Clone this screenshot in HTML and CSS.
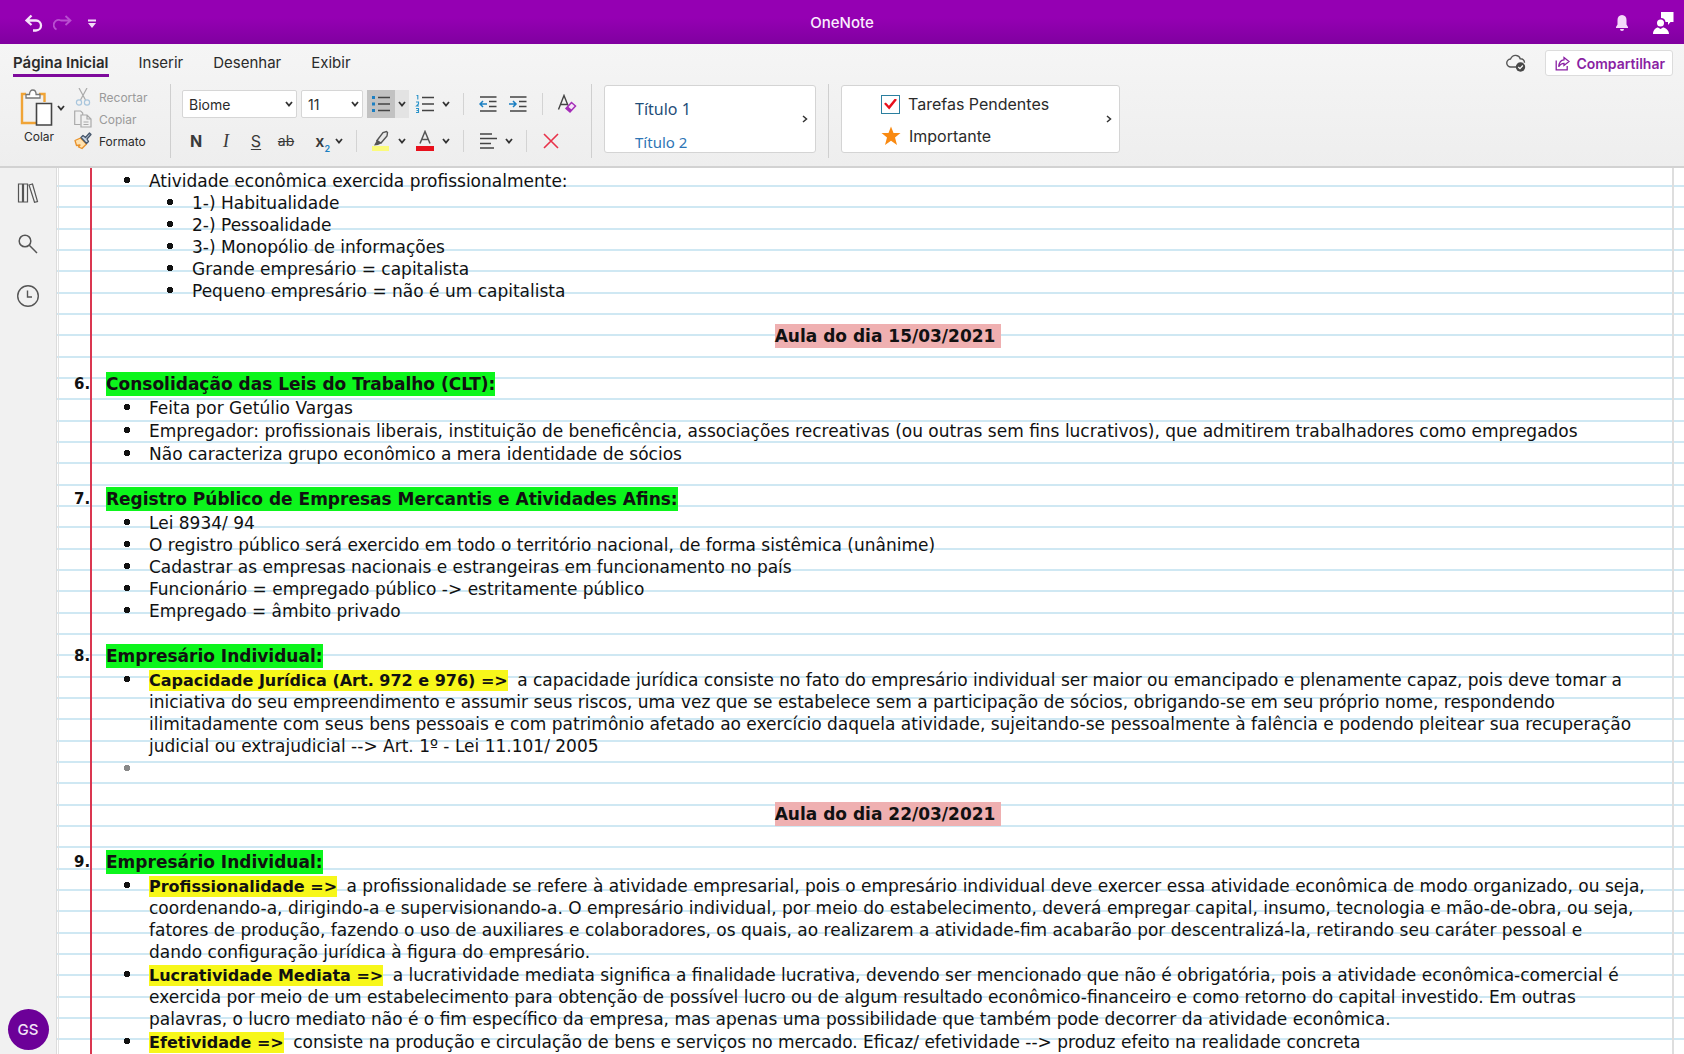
FILE: index.html
```html
<!DOCTYPE html>
<html lang="pt-BR">
<head>
<meta charset="utf-8">
<title>OneNote</title>
<link rel="stylesheet" href="styles.css">
</head>
<body>
<svg class="defs" aria-hidden="true">
  <symbol id="chev" viewBox="0 0 8 6"><path d="M1 1l3 3.500 3-3.500" fill="none" stroke="#333" stroke-width="1.800"/></symbol>
  <symbol id="chev-right" viewBox="0 0 6 8"><path d="M1 1l3.500 3-3.500 3" fill="none" stroke="#333" stroke-width="1.500"/></symbol>
</svg>
<div class="app">
  <header class="titlebar">
    <div class="quick">
      <button class="plain" aria-label="Desfazer"><svg width="20" height="20" viewBox="0 0 20 20" fill="none" stroke="#f6e4fa" stroke-width="2.300"><path d="M7.500 2.500L2.500 7.500l5 4.500M2.500 7.500h9.500a5 5 0 0 1 0 10H9"/></svg></button>
      <button class="plain" aria-label="Refazer"><svg width="20" height="20" viewBox="0 0 20 20" fill="none" stroke="#b94fd0" stroke-width="1.800"><path d="M12.500 3l5 4.500-5 4.500M17.500 7.500H8a5 5 0 0 0 -4.500 9"/></svg></button>
      <button class="plain" aria-label="Personalizar"><svg width="20" height="20" viewBox="0 0 20 20" fill="#f0dcf6"><path d="M6 6.500h8v2H6zM6 10h8l-4 5z"/></svg></button>
    </div>
    <h1 class="app-name">OneNote</h1>
    <div class="account">
      <button class="plain" aria-label="Notificações"><svg width="16" height="18" viewBox="0 0 16 18" fill="#f4d9fa"><path d="M8 1c3 0 4.500 2.200 4.500 5v4.500l1.500 2.500v1H2v-1l1.500-2.500V6C3.500 3.200 5 1 8 1zM6 15h4a2 2 0 0 1-4 0z"/></svg></button>
      <button class="plain" aria-label="Conta"><svg width="22" height="24" viewBox="0 0 22 24" fill="#fff"><path d="M9 1h12.500v10h-3L16 14v-3h-2.500A4.500 4.500 0 0 0 9 7z"/><circle cx="8.500" cy="12" r="3.500"/><path d="M1 23c0-4 3-6.500 5-6.500l2.500 1.500 2.500-1.500c2 0 6 2.500 6 6.500z"/></svg></button>
    </div>
  </header>

  <div class="ribbon">
    <div class="tabs">
      <nav class="tab-list">
        <a class="tab active" href="#">Página Inicial</a>
        <a class="tab" href="#">Inserir</a>
        <a class="tab" href="#">Desenhar</a>
        <a class="tab" href="#">Exibir</a>
      </nav>
      <div class="share-area">
        <svg width="20" height="20" viewBox="0 0 20 20"><path d="M10 14H5a4 4 0 0 1-.500-8C6 3 8 2 10.500 2.500c2 .300 3.200 1.500 3.700 3.200 2.500-.200 4.300 1.500 4.300 4" fill="none" stroke="#555" stroke-width="1.400"/><circle cx="14.500" cy="14" r="4.700" fill="#484848"/><path d="M12.300 14l1.700 1.700 2.800-3.200" fill="none" stroke="#fff" stroke-width="1.200"/></svg>
        <button class="share"><svg width="15" height="15" viewBox="0 0 15 15" fill="none" stroke="#8a1fa3" stroke-width="1.300"><path d="M1.200 4.500v9.300h11V10M9 1.500l5 4-5 4V7.300C6.500 7.300 5 8.500 3.700 10.800 4 7 6 4 9 3.800z"/></svg>Compartilhar</button>
      </div>
    </div>

    <div class="groups">
      <div class="group clipboard">
        <button class="plain paste">
          <span class="paste-icon">
            <svg width="34" height="38" viewBox="0 0 34 38"><path d="M6 5H2v29h16M19 5h5.500v8" fill="none" stroke="#f0a437" stroke-width="2.400"/><path d="M6 9V5.500h3.500C9.500 2.500 11 1 12.800 1s3.300 1.500 3.300 4.500H20V9z" fill="#fff" stroke="#777" stroke-width="1.300"/><path d="M16.500 14.500h15V36h-15z" fill="#fff" stroke="#444" stroke-width="1.600"/></svg>
            <svg width="8" height="6"><use href="#chev"/></svg>
          </span>
          Colar
        </button>
        <div class="clip-list">
          <button class="clip off"><svg width="18" height="18" viewBox="0 0 18 18" fill="none" stroke-width="1.200"><path d="M5 0l6.500 12M13 0L6.500 12" stroke="#aaa"/><circle cx="5" cy="14.500" r="2.600" stroke="#a9c6dd"/><circle cx="13" cy="14.500" r="2.600" stroke="#a9c6dd"/></svg>Recortar</button>
          <button class="clip off"><svg width="18" height="18" viewBox="0 0 18 18" fill="#f1f1f1" stroke="#aaa" stroke-width="1.200"><path d="M6.500 14.500H.700V1h6l2 2v2"/><path d="M7 5h6l4 4v8H7zM13 5v4h4M9.500 12h5M9.500 14.500h5"/></svg>Copiar</button>
          <button class="clip"><svg width="18" height="18" viewBox="0 0 18 18" stroke-linejoin="round" stroke-width="1.300"><path d="M1 8.500L6.500 6l6 6L8 16.500 4.500 15 6 13l-3.500.500z" fill="#ffe2b0" stroke="#e8912a"/><path d="M7 5.500l2-2 2.500 2 4-4.500 1.500 1.500-4 4.500 1.500 2.500-2 2z" fill="#c6d3e2" stroke="#46566b"/></svg>Formato</button>
        </div>
      </div>

      <div class="group tools">
        <div class="tool-row">
          <label class="picker font"><select aria-label="Fonte"><option>Biome</option></select><svg width="8" height="6"><use href="#chev"/></svg></label>
          <label class="picker size"><select aria-label="Tamanho"><option>11</option></select><svg width="8" height="6"><use href="#chev"/></svg></label>
          <span class="split pressed">
            <button class="tool" aria-label="Marcadores"><svg width="20" height="20" viewBox="0 0 20 20"><path d="M7 3.500h12M7 10h12M7 16.500h12" stroke="#444" stroke-width="1.500"/><path d="M1 2h3v3H1zM1 8.500h3v3H1zM1 15h3v3H1z" fill="#1b7fc2"/></svg></button>
            <button class="drop" aria-label="Opções de marcadores"><svg width="8" height="6"><use href="#chev"/></svg></button>
          </span>
          <span class="split">
            <button class="tool" aria-label="Numeração"><svg width="20" height="20" viewBox="0 0 20 20"><path d="M7 3.500h12M7 10h12M7 16.500h12" stroke="#444" stroke-width="1.500"/><path d="M1.500 1.500h1.300v4M1 8h2.500v2L1.500 12h2.500M1 14.500h2.500v4H1M1.500 16.500h2" fill="none" stroke="#2b93c9" stroke-width="1.100"/></svg></button>
            <button class="drop" aria-label="Opções de numeração"><svg width="8" height="6"><use href="#chev"/></svg></button>
          </span>
          <span class="rule"></span>
          <button class="tool" aria-label="Diminuir recuo"><svg width="18" height="18" viewBox="0 0 18 18" fill="none"><path d="M1 2h16.500M10 6.500h7.500M10 11.500h7.500M1 16h16.500" stroke="#444" stroke-width="1.400"/><path d="M8 9H1M4 6L1 9l3 3" stroke="#1b7fc2" stroke-width="1.500"/></svg></button>
          <button class="tool" aria-label="Aumentar recuo"><svg width="18" height="18" viewBox="0 0 18 18" fill="none"><path d="M1 2h16.500M10 6.500h7.500M10 11.500h7.500M1 16h16.500" stroke="#444" stroke-width="1.400"/><path d="M0 9h7M4 6l3 3-3 3" stroke="#1b7fc2" stroke-width="1.500"/></svg></button>
          <span class="rule"></span>
          <button class="tool" aria-label="Limpar formatação"><svg width="20" height="20" viewBox="0 0 20 20" fill="none"><path d="M1.500 15.500L7 1.500l4 10M3.500 10.500h6.500" stroke="#444" stroke-width="1.400"/><path d="M14.500 8.500l4 3.500-5.500 6-4-3.500z" fill="#f5e3f8" stroke="#a52db8" stroke-width="1.500"/><path d="M11 12.500l4 3.500-2 2-4-3.500z" fill="#a52db8"/></svg></button>
        </div>
        <div class="tool-row">
          <button class="tool letter bold">N</button>
          <button class="tool letter italic">I</button>
          <button class="tool letter under">S</button>
          <button class="tool letter strike">ab</button>
          <span class="split">
            <button class="tool letter script">x<sub>2</sub></button>
          </span>
          <button class="drop" aria-label="Opções de subscrito"><svg width="8" height="6"><use href="#chev"/></svg></button>
          <span class="rule"></span>
          <span class="split">
            <button class="tool" aria-label="Realce"><svg width="20" height="22" viewBox="0 0 20 22"><path d="M1 16h17v5H1z" fill="#fbfb7c"/><path d="M6 10.500L12 2.500l3.500-1 1 1-.500 3.500-6 7z" fill="#e8e8e8" stroke="#555" stroke-width="1.400"/><path d="M6 10l4 3.500-3 1.500-4 .500z" fill="#555"/></svg></button>
            <button class="drop" aria-label="Cores de realce"><svg width="8" height="6"><use href="#chev"/></svg></button>
          </span>
          <span class="split">
            <button class="tool" aria-label="Cor da fonte"><svg width="20" height="22" viewBox="0 0 20 22"><path d="M5 13.500L10 1.500l5 12M7 9.500h6" fill="none" stroke="#555" stroke-width="1.500"/><path d="M1 16h18v5H1z" fill="#e8101c"/></svg></button>
            <button class="drop" aria-label="Cores da fonte"><svg width="8" height="6"><use href="#chev"/></svg></button>
          </span>
          <span class="rule"></span>
          <span class="split">
            <button class="tool" aria-label="Alinhamento"><svg width="18" height="18" viewBox="0 0 18 18"><path d="M1 2h12M1 6.500h17M1 11.500h11M1 16h14" stroke="#444" stroke-width="1.400"/></svg></button>
            <button class="drop" aria-label="Opções de alinhamento"><svg width="8" height="6"><use href="#chev"/></svg></button>
          </span>
          <span class="rule"></span>
          <button class="tool" aria-label="Excluir"><svg width="16" height="16" viewBox="0 0 16 16"><path d="M1 1l14 14M15 1L1 15" stroke="#e8324a" stroke-width="1.600"/></svg></button>
        </div>
      </div>

      <div class="group">
        <div class="gallery styles">
          <div class="gallery-list">
            <button class="plain title-one">Título 1</button>
            <button class="plain title-two">Título 2</button>
          </div>
          <button class="plain" aria-label="Mais estilos"><svg width="6" height="8"><use href="#chev-right"/></svg></button>
        </div>
      </div>

      <div class="group">
        <div class="gallery tags">
          <div class="gallery-list">
            <label class="tag"><input type="checkbox" checked>Tarefas Pendentes</label>
            <button class="plain tag"><svg width="20" height="20" viewBox="0 0 20 20"><path d="M10 .500l2.500 6.500h7L14 11.500l2 7.500-6-4.300L4 19l2-7.500L.500 7h7z" fill="#f98a12"/></svg>Importante</button>
          </div>
          <button class="plain" aria-label="Mais marcas"><svg width="6" height="8"><use href="#chev-right"/></svg></button>
        </div>
      </div>
    </div>
  </div>

  <div class="workspace">
    <aside class="sidebar">
      <button class="plain" aria-label="Blocos de anotações"><svg width="22" height="22" viewBox="0 0 22 22" fill="none" stroke="#555" stroke-width="1.200"><path d="M1.500 2h4v18h-4zM6.500 2h4v18h-4zM12 3l3.500-1 5 17.500-3 .800z"/></svg></button>
      <button class="plain" aria-label="Pesquisar"><svg width="22" height="22" viewBox="0 0 22 22" fill="none" stroke="#555" stroke-width="1.500"><circle cx="8" cy="8" r="5.800"/><path d="M12.300 12.300L20 20"/></svg></button>
      <button class="plain" aria-label="Recentes"><svg width="24" height="24" viewBox="0 0 24 24" fill="none" stroke="#555" stroke-width="1.400"><circle cx="12" cy="12" r="10.300"/><path d="M11.500 6.500V13H16"/></svg></button>
      <button class="avatar">GS</button>
    </aside>

    <main class="notes">
      <ul class="points">
        <li>Atividade econômica exercida profissionalmente:
          <ul>
            <li>1-) Habitualidade</li>
            <li>2-) Pessoalidade</li>
            <li>3-) Monopólio de informações</li>
            <li>Grande empresário = capitalista</li>
            <li>Pequeno empresário = não é um capitalista</li>
          </ul>
        </li>
      </ul>

      <p class="date"><mark>Aula do dia 15/03/2021&nbsp;</mark></p>

      <section>
        <h2><span class="num">6.</span><mark>Consolidação das Leis do Trabalho (CLT):</mark></h2>
        <ul class="points">
          <li>Feita por Getúlio Vargas</li>
          <li>Empregador: profissionais liberais, instituição de beneficência, associações recreativas (ou outras sem fins lucrativos), que admitirem trabalhadores como empregados</li>
          <li>Não caracteriza grupo econômico a mera identidade de sócios</li>
        </ul>
      </section>

      <section>
        <h2><span class="num">7.</span><mark>Registro Público de Empresas Mercantis e Atividades Afins:</mark></h2>
        <ul class="points tight">
          <li>Lei 8934/ 94</li>
          <li>O registro público será exercido em todo o território nacional, de forma sistêmica (unânime)</li>
          <li>Cadastrar as empresas nacionais e estrangeiras em funcionamento no país</li>
          <li>Funcionário = empregado público -&gt; estritamente público</li>
          <li>Empregado = âmbito privado</li>
        </ul>
      </section>

      <section>
        <h2><span class="num">8.</span><mark>Empresário Individual:</mark></h2>
        <ul class="points">
          <li><mark>Capacidade Jurídica (Art. 972 e 976) =&gt;</mark> a capacidade jurídica consiste no fato do empresário individual ser maior ou emancipado e plenamente capaz, pois deve tomar a<br>iniciativa do seu empreendimento e assumir seus riscos, uma vez que se estabelece sem a participação de sócios, obrigando-se em seu próprio nome, respondendo<br>ilimitadamente com seus bens pessoais e com patrimônio afetado ao exercício daquela atividade, sujeitando-se pessoalmente à falência e podendo pleitear sua recuperação<br>judicial ou extrajudicial --&gt; Art. 1º - Lei 11.101/ 2005</li>
          <li class="blank"></li>
        </ul>
      </section>

      <p class="date"><mark>Aula do dia 22/03/2021&nbsp;</mark></p>

      <section>
        <h2><span class="num">9.</span><mark>Empresário Individual:</mark></h2>
        <ul class="points">
          <li><mark>Profissionalidade =&gt;</mark> a profissionalidade se refere à atividade empresarial, pois o empresário individual deve exercer essa atividade econômica de modo organizado, ou seja,<br>coordenando-a, dirigindo-a e supervisionando-a. O empresário individual, por meio do estabelecimento, deverá empregar capital, insumo, tecnologia e mão-de-obra, ou seja,<br>fatores de produção, fazendo o uso de auxiliares e colaboradores, os quais, ao realizarem a atividade-fim acabarão por descentralizá-la, retirando seu caráter pessoal e<br>dando configuração jurídica à figura do empresário.</li>
          <li><mark>Lucratividade Mediata =&gt;</mark> a lucratividade mediata significa a finalidade lucrativa, devendo ser mencionado que não é obrigatória, pois a atividade econômica-comercial é<br>exercida por meio de um estabelecimento para obtenção de possível lucro ou de algum resultado econômico-financeiro e como retorno do capital investido. Em outras<br>palavras, o lucro mediato não é o fim específico da empresa, mas apenas uma possibilidade que também pode decorrer da atividade econômica.</li>
          <li><mark>Efetividade =&gt;</mark> consiste na produção e circulação de bens e serviços no mercado. Eficaz/ efetividade --&gt; produz efeito na realidade concreta</li>
        </ul>
      </section>
    </main>
  </div>
</div>
</body>
</html>
```
FILE: styles.css
```css
* { box-sizing: border-box; }

body {
  margin: 0;
  font-family: Inter, "Liberation Sans", sans-serif;
  font-size: 14px;
  color: #2b2b2b;
}

button, select, input { font: inherit; color: inherit; margin: 0; }
button { padding: 0; border: 0; background: none; }
svg { display: block; flex: none; }
.defs { position: absolute; width: 0; height: 0; }

.app {
  display: flex;
  flex-direction: column;
  height: 100vh;
  overflow: hidden;
}

/* Title bar */
.titlebar {
  display: grid;
  grid-template-columns: 1fr auto 1fr;
  align-items: center;
  height: 44px;
  padding: 1px 10px 0;
  background: linear-gradient(#9500b3 40%, #8000a0);
  color: #fbeefe;
}
.quick { display: flex; gap: 9px; padding-left: 14px; }
.app-name { margin: 0; font-size: 15px; font-weight: 500; line-height: 20px; }
.account { display: flex; justify-content: flex-end; align-items: center; gap: 22px; }

/* Ribbon */
.ribbon {
  background: linear-gradient(#f5f5f5, #eeeeee);
  border-bottom: 2px solid #d2d2d2;
}
.tabs {
  display: flex;
  justify-content: space-between;
  height: 36px;
  padding: 6px 11px 0 13px;
}
.tab-list { display: flex; gap: 30px; }
.tab {
  height: 27px;
  font-size: 15px;
  line-height: 25px;
  color: #2b2b2b;
  text-decoration: none;
  white-space: nowrap;
}
.tab.active { font-weight: 600; border-bottom: 3px solid #7e0a9c; }
.share-area { display: flex; align-items: center; gap: 19px; height: 26px; }
.share {
  display: flex;
  align-items: center;
  gap: 6px;
  height: 26px;
  padding: 0 7px 0 9px;
  background: #fff;
  border: 1px solid #dcdcdc;
  border-radius: 3px;
  color: #8a1fa3;
  font-weight: 600;
}

.groups { display: flex; height: 86px; padding: 4px 0 8px; }
.group { display: flex; border-right: 1px solid #cfcfcf; padding: 1px 12px 4px; }
.group:last-child { border-right: 0; }

.clipboard { width: 171px; padding: 2px 0 0 20px; gap: 8px; }
.paste {
  display: flex;
  flex-direction: column;
  align-items: flex-start;
  gap: 2px;
  width: 46px;
  padding-top: 3px;
  font-size: 12px;
  line-height: 16px;
  text-indent: 4px;
}
.paste-icon { display: flex; align-items: center; gap: 3px; }
.clip-list { display: flex; flex-direction: column; }
.clip {
  display: flex;
  align-items: center;
  gap: 7px;
  height: 22px;
  font-size: 12px;
}
.clip.off { color: #9a9a9a; }

.tools { flex-direction: column; gap: 9px; width: 421px; padding: 6px 0 0 11px; }
.tool-row { display: flex; align-items: center; gap: 2px; height: 28px; }
.tool { display: grid; place-items: center; width: 28px; height: 28px; }
.drop { display: grid; place-items: center; width: 14px; height: 28px; }
.split { display: flex; }
.pressed .tool { background: #c2c2c2; }
.pressed .drop { background: #e3e3e3; }
.rule { width: 1px; height: 22px; margin: 0 8px; background: #d3d3d3; }
.letter { font-size: 16px; color: #3a3a3a; line-height: 20px; }
.bold { font-weight: 700; }
.italic { font-family: "Liberation Serif", serif; font-style: italic; font-size: 18px; }
.under { text-decoration: underline; text-underline-offset: 2px; }
.strike { font-size: 14px; text-decoration: line-through; }
.script { display: flex; align-items: center; justify-content: flex-end; font-size: 16px; font-weight: 600; }
.script sub { align-self: flex-end; font-size: 9px; line-height: 12px; color: #1b7fc2; }

.picker { display: grid; align-items: center; margin-right: 2px; }
.picker > * { grid-area: 1 / 1; }
.picker svg { justify-self: end; margin-right: 4px; pointer-events: none; }
.picker select {
  appearance: none;
  width: 100%;
  height: 28px;
  padding: 0 6px;
  background: #fff;
  border: 1px solid #d6d6d6;
  border-radius: 2px;
}
.font { width: 115px; }
.size { width: 62px; }

.gallery {
  display: flex;
  align-items: center;
  height: 68px;
  padding-right: 7px;
  background: #fff;
  border: 1px solid #d4d4d4;
  border-radius: 3px;
}
.gallery-list { display: flex; flex-direction: column; align-items: flex-start; flex: 1; }
.styles { width: 212px; padding-left: 30px; font-family: "Noto Sans", sans-serif; }
.styles .gallery-list { gap: 13px; padding-top: 12px; }
.title-one { font-size: 16px; line-height: 20px; color: #1f4e79; }
.title-two { font-size: 15px; line-height: 20px; color: #2e75b5; }
.tags { width: 279px; padding-left: 39px; }
.tags .gallery-list { gap: 8px; padding-top: 2px; }
.tag { display: flex; align-items: center; gap: 8px; height: 24px; font-size: 16px; }
.tag input {
  appearance: none;
  display: grid;
  place-items: center;
  width: 19px;
  height: 19px;
  border: 1px solid #2b7f9f;
  background: #fff;
}
.tag input:checked::before {
  content: "";
  width: 13px;
  height: 11px;
  background: #e8101c;
  clip-path: polygon(0 48%, 14% 36%, 38% 66%, 84% 0, 100% 12%, 40% 100%);
}

/* Workspace */
.workspace { display: flex; flex: 1; min-height: 0; }
.sidebar {
  display: flex;
  flex-direction: column;
  align-items: center;
  gap: 29px;
  width: 57px;
  padding: 14px 0 4px;
  background: #f1f1f1;
  border-right: 1px solid #dcdcdc;
}
.avatar {
  width: 41px;
  height: 41px;
  margin-top: auto;
  border-radius: 50%;
  background: #6c0098;
  color: #f3e4f7;
  font-size: 15px;
  font-weight: 500;
}

/* Ruled paper: three lines in each 64px tile, plus the margin lines */
.notes {
  flex: 1;
  min-width: 0;
  overflow: hidden;
  padding: 2px 14px 0 49px;
  font-family: "DejaVu Sans", "Noto Sans", sans-serif;
  font-size: 17px;
  line-height: 22px;
  color: #111;
  white-space: nowrap;
  background:
    linear-gradient(#da3650, #da3650) 33px 0 / 2px 100% no-repeat,
    linear-gradient(#dedede, #dedede) right 10px top 0 / 2px 100% no-repeat,
    linear-gradient(#e2e2e2, #e2e2e2) 1px 0 / 1px 100% no-repeat,
    linear-gradient(#cfe8f3 2px, transparent 2px 21px, #cfe8f3 21px 23px, transparent 23px 43px, #cfe8f3 43px 45px, transparent 45px) 0 17px / 100% 64px #fff;
}
.notes ul { margin: 0; padding: 0; list-style: none; }
.notes .points { padding-left: 43px; }
.notes .points ul { padding-left: 43px; }
.points li::before {
  content: "";
  display: inline-block;
  width: 25px;
  height: 7px;
  margin-left: -25px;
  vertical-align: 3px;
  background: radial-gradient(circle at 3px 3px, #111 3px, transparent 3px) no-repeat;
}
.points li { min-height: 22px; }
.points > li + li { margin-top: 1px; }
.tight > li + li { margin-top: 0; }
.points .blank::before { opacity: 0.5; }

.notes mark { color: #111; padding: 1px 0; }
.notes li mark { margin-right: 4px; background: #f7f71a; font-size: 16px; font-weight: 700; line-height: 18px; }
.date { margin: 22px 0 24px; text-align: center; font-size: 17px; font-weight: 700; line-height: 24px; }
.date mark { padding: 2px 0; background: #efb0b1; }
.notes section { margin-top: 22px; }
.notes h2 { display: flex; align-items: center; margin: 0 0 1px; font-size: 17px; line-height: 22px; }
.notes h2 mark { background: #0cf51c; }
.num { width: 32px; margin-left: -32px; font-size: 15px; }
```
